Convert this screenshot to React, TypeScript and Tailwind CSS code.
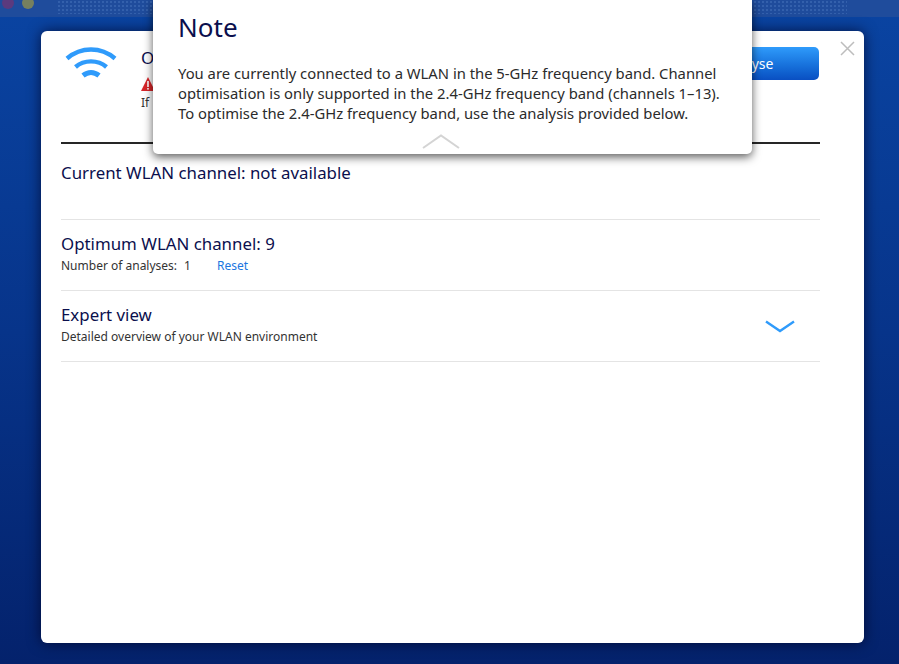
import React from "react";

function Wifi() {
  return (
    <svg width="52" height="32" viewBox="0 0 52 32" fill="none" stroke="#2f9bfb" strokeWidth="4.4">
      <path d="M2 11.5 C16 -0.5 36 -0.5 50 11.5" />
      <path d="M10.5 20 C19 12.5 33 12.5 41.5 20" />
      <path d="M18 28.5 C23 24.5 29 24.5 34 28.5" strokeWidth="5" />
    </svg>
  );
}

export default function App() {
  const font = { fontFamily: '"Noto Sans", "Lato", sans-serif' };
  return (
    <div
      style={font}
      className="relative w-[899px] h-[664px] overflow-hidden flex flex-col bg-gradient-to-b from-[#0a44a2] via-[#07348a] to-[#04226c]"
    >
      <div className="h-[17px] shrink-0 bg-[#1f4c9c] flex items-start pl-[2px] overflow-hidden">
        <div className="w-[12px] h-[12px] rounded-full bg-[#5b3a7e] -mt-[3px] shrink-0" />
        <div className="w-[12px] h-[12px] rounded-full bg-[#76805f] -mt-[3px] ml-[8px] shrink-0" />
        <div className="ml-[23px] w-[790px] h-[14px] bg-[radial-gradient(circle,#3360ac_1px,transparent_1.2px)] bg-[length:4px_4px]" />
      </div>
      <div className="pt-[14px] pl-[41px]">
        <div className="relative w-[823px] h-[612px] bg-white rounded-[6px] shadow-[0_0_14px_rgba(0,0,30,0.7)] pl-[20px] pr-[44px] pt-[16px]">
          <div className="h-[97px] flex items-start border-b-2 border-[#262626]">
            <div className="w-[60px] pl-[4px] shrink-0"><Wifi /></div>
            <div className="w-[20px]" />
            <div className="w-[12px] flex flex-col pt-[1px]">
              <div className="text-[17px] leading-[20px] text-[#0b0f4d]">O</div>
              <div className="h-[13px] mt-[9px]">
                <svg width="14" height="14" viewBox="0 0 14 14"><path d="M7 0 L14 14 L0 14 Z" fill="#d8262a" /><rect x="6.2" y="4" width="1.6" height="6" fill="#fff" /><rect x="6.2" y="11" width="1.6" height="1.6" fill="#fff" /></svg>
              </div>
              <div className="text-[12px] leading-[16px] text-[#333] mt-[5px]">If</div>
            </div>
            <div className="flex-1" />
            <button className="w-[142px] h-[33px] rounded-[5px] bg-gradient-to-b from-[#2f9bfb] to-[#0a4fc2] text-white text-[14px] leading-[33px] text-center mr-[1px]">Analyse</button>
          </div>

          <div className="h-[76px] border-b border-[#e4e4e4] pt-[19px]">
            <div className="text-[16.85px] leading-[20px] text-[#0b0f4d]">Current WLAN channel: not available</div>
          </div>

          <div className="h-[71px] border-b border-[#e4e4e4] pt-[14px]">
            <div className="text-[16.85px] leading-[20px] text-[#0b0f4d]">Optimum WLAN channel: 9</div>
            <div className="flex text-[12px] leading-[16px] mt-[4px] text-[#333]">
              <span className="w-[156px] flex">
                <span>Number of analyses:</span>
                <span className="ml-[7px]">1</span>
              </span>
              <span className="text-[#1b76e0]">Reset</span>
            </div>
          </div>

          <div className="h-[71px] border-b border-[#e4e4e4] pt-[14px] pr-[25px] flex justify-between">
            <div>
              <div className="text-[16.85px] leading-[20px] text-[#0b0f4d]">Expert view</div>
              <div className="text-[12px] leading-[16px] mt-[4px] text-[#333]">Detailed overview of your WLAN environment</div>
            </div>
            <svg className="mt-[15px]" width="30" height="13" viewBox="0 0 30 13" fill="none" stroke="#2f9bfb" strokeWidth="2.4">
              <path d="M1 1.5 L15 11 L29 1.5" />
            </svg>
          </div>

          <svg className="absolute top-[10px] right-[9px]" width="15" height="15" viewBox="0 0 15 15" stroke="#bdbdbd" strokeWidth="1.5">
            <path d="M1 1 L14 14 M14 1 L1 14" />
          </svg>
        </div>
      </div>

      <div className="absolute left-[153px] top-0 w-[599px] h-[154px] bg-white rounded-b-[5px] shadow-[0_3px_10px_rgba(0,0,0,0.65)] pl-[25px] pt-[10px]">
        <div className="text-[26px] leading-[34px] text-[#0b0f4d]">Note</div>
        <div className="mt-[19px] text-[14.8px] leading-[20px] text-[#2b2b2b] w-[560px] whitespace-nowrap">
          <div>You are currently connected to a WLAN in the 5-GHz frequency band. Channel</div>
          <div>optimisation is only supported in the 2.4-GHz frequency band (channels 1–13).</div>
          <div>To optimise the 2.4-GHz frequency band, use the analysis provided below.</div>
        </div>
        <svg className="absolute left-[269px] top-[134px]" width="38" height="15" viewBox="0 0 38 15" fill="none" stroke="#d4d4d4" strokeWidth="2">
          <path d="M1 14 L19 1.5 L37 14" />
        </svg>
      </div>
    </div>
  );
}
